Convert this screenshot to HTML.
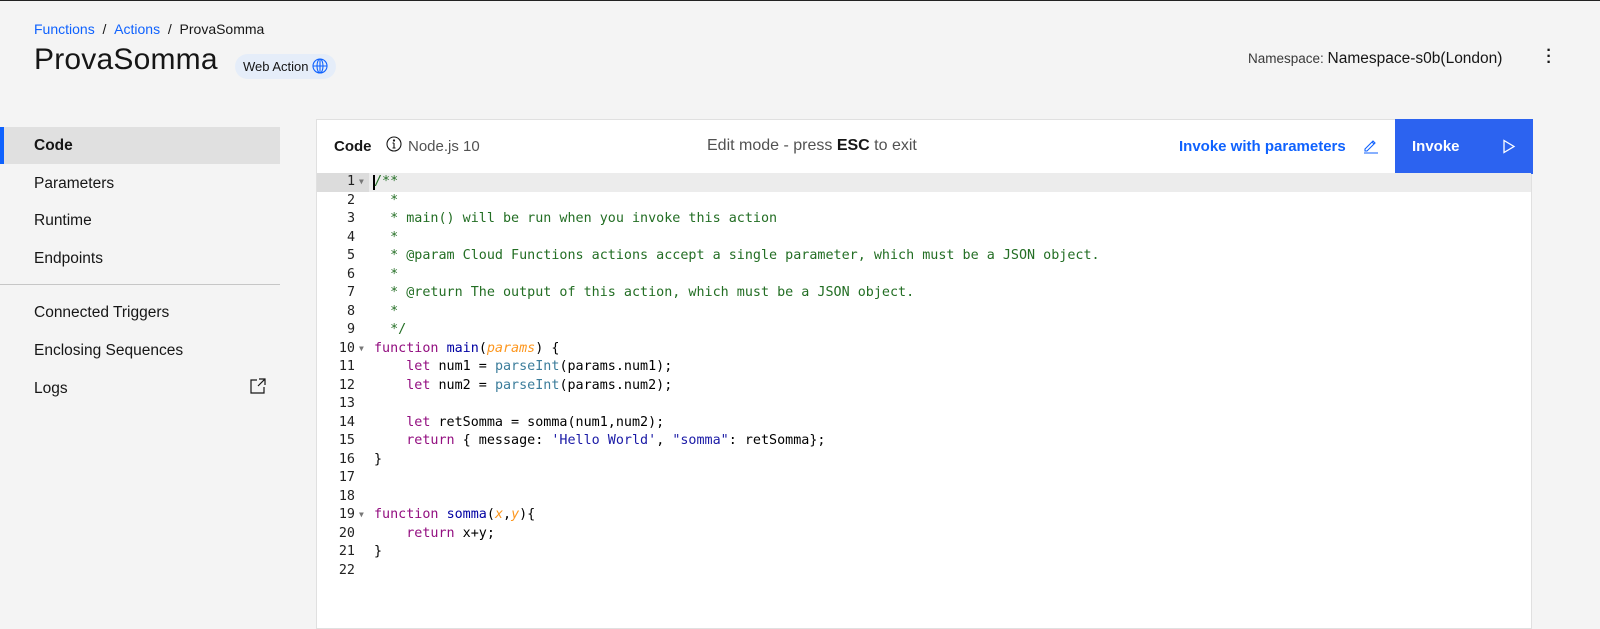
<!DOCTYPE html>
<html><head><meta charset="utf-8"><style>
*{box-sizing:border-box;margin:0;padding:0}
body{width:1600px;height:621px;background:#f4f4f4;font-family:"Liberation Sans",sans-serif;color:#161616;position:relative;overflow:hidden;border-top:1px solid #222}
.a{position:absolute;white-space:nowrap}
.bc{top:20px;left:34px;font-size:14px}
.bc .l{color:#0f62fe}
h1{position:absolute;left:34px;top:42px;font-size:30px;font-weight:400;letter-spacing:.2px}
.tag{left:235px;top:53px;height:25px;padding:0 8px;background:#e5edf9;border-radius:13px;font-size:13px;line-height:25px;color:#161616}
.nav{left:0;width:280px;font-size:15.5px;height:37px;line-height:37px;padding-left:34px}
.sel{background:#e0e0e0;border-left:4px solid #0f62fe;padding-left:30px;font-weight:bold}
.panel{left:316px;top:118px;width:1216px;height:510px;background:#fff;border:1px solid #e0e0e0}
.hdr{height:54px;border-bottom:1px solid #e0e0e0;position:relative}
.ln{position:absolute;left:0;width:38px;text-align:right;color:#222}
.tx{position:absolute;left:57px;white-space:pre;color:#000}
.c{color:#236e24}.k{color:#930f80}.f{color:#0000a2}.p{color:#fd971f;font-style:italic}.s{color:#1a1aa6}.b{color:#3c7d9b}
</style></head><body>
<div class="a bc"><span class="l">Functions</span>&nbsp;&nbsp;/&nbsp;&nbsp;<span class="l">Actions</span>&nbsp;&nbsp;/&nbsp;&nbsp;ProvaSomma</div>
<h1>ProvaSomma</h1>
<div class="a tag">Web Action <svg width="16" height="16" viewBox="0 0 16 16" style="vertical-align:-3px" fill="none" stroke="#0f62fe" stroke-width="1.1"><circle cx="8" cy="8" r="7"/><ellipse cx="8" cy="8" rx="3" ry="7"/><path d="M1 8h14M8 1v14"/></svg></div>
<div class="a" style="left:1248px;top:49px;font-size:13.5px;color:#393939">Namespace: <span style="font-size:15.5px;color:#161616">Namespace-s0b(London)</span></div>
<div class="a" style="left:1546px;top:47px;font-size:16px;font-weight:bold;line-height:6px;width:6px;text-align:center">·<br>·<br>·</div>

<div class="a nav sel" style="top:126px">Code</div>
<div class="a nav" style="top:164px">Parameters</div>
<div class="a nav" style="top:201px">Runtime</div>
<div class="a nav" style="top:239px">Endpoints</div>
<div class="a" style="left:0;top:283px;width:280px;height:1px;background:#c6c6c6"></div>
<div class="a nav" style="top:293px">Connected Triggers</div>
<div class="a nav" style="top:331px">Enclosing Sequences</div>
<div class="a nav" style="top:369px">Logs</div>
<svg class="a" style="left:249px;top:376px" width="18" height="18" viewBox="0 0 18 18" fill="none" stroke="#161616" stroke-width="1.2"><path d="M8 3H2v13h13v-6M10 2h6v6M16 2l-7 7"/></svg>

<div class="a panel">
 <div class="hdr">
  <div class="a" style="left:17px;top:18px;font-size:15px;font-weight:bold">Code</div>
  <svg class="a" style="left:69px;top:16px" width="16" height="16" viewBox="0 0 16 16" fill="none" stroke="#161616" stroke-width="1.1"><circle cx="8" cy="8" r="7"/><path d="M8 7v5M6.5 12h3M6.5 7H8"/><circle cx="8" cy="4.5" r=".6" fill="#161616"/></svg>
  <div class="a" style="left:91px;top:18px;font-size:15px;color:#525252">Node.js 10</div>
  <div class="a" style="left:390px;top:17px;font-size:16px;color:#525252">Edit mode - press <b style="color:#161616">ESC</b> to exit</div>
  <div class="a" style="left:862px;top:18px;font-size:15px;font-weight:bold;color:#0f62fe">Invoke with parameters</div>
  <svg class="a" style="left:1045px;top:17px" width="17" height="17" viewBox="0 0 17 17" fill="none" stroke="#0f62fe" stroke-width="1.1"><path d="M3 12l8-8 2 2-8 8H3zM10 5l2 2M2 16h14"/></svg>
  <div class="a" style="left:1078px;top:-1px;width:138px;height:55px;background:#2c63f0;color:#fff;font-size:15px;font-weight:bold;padding:19px 0 0 17px">Invoke
   <svg style="position:absolute;left:107px;top:20px" width="14" height="15" viewBox="0 0 14 15" fill="none" stroke="#fff" stroke-width="1.3"><path d="M2 1.5v12l10-6z"/></svg></div>
 </div>
</div>
<div class="a" style="left:317px;top:172px;width:1214px;height:450px;font-family:'DejaVu Sans Mono',monospace;font-size:13.4px;line-height:18.5px">
<div class="a" style="left:0;top:0;width:52px;height:18.5px;background:#dcdcdc"></div>
<div class="a" style="left:52px;top:0;width:1162px;height:18.5px;background:#ececec"></div>
<div class="ln" style="top:0">1</div><div class="ln" style="top:18.5px">2</div><div class="ln" style="top:37px">3</div><div class="ln" style="top:55.5px">4</div><div class="ln" style="top:74px">5</div><div class="ln" style="top:92.5px">6</div><div class="ln" style="top:111px">7</div><div class="ln" style="top:129.5px">8</div><div class="ln" style="top:148px">9</div><div class="ln" style="top:166.5px">10</div><div class="ln" style="top:185px">11</div><div class="ln" style="top:203.5px">12</div><div class="ln" style="top:222px">13</div><div class="ln" style="top:240.5px">14</div><div class="ln" style="top:259px">15</div><div class="ln" style="top:277.5px">16</div><div class="ln" style="top:296px">17</div><div class="ln" style="top:314.5px">18</div><div class="ln" style="top:333px">19</div><div class="ln" style="top:351.5px">20</div><div class="ln" style="top:370px">21</div><div class="ln" style="top:388.5px">22</div>
<div class="a" style="left:42px;top:0;font-size:8px;color:#777">▼</div><div class="a" style="left:42px;top:166.5px;font-size:8px;color:#777">▼</div><div class="a" style="left:42px;top:333px;font-size:8px;color:#777">▼</div>
<div class="a" style="left:56px;top:2px;width:2px;height:15px;background:#000"></div>
<div class="tx" style="top:0"><span class="c">/**
  *
  * main() will be run when you invoke this action
  *
  * @param Cloud Functions actions accept a single parameter, which must be a JSON object.
  *
  * @return The output of this action, which must be a JSON object.
  *
  */</span>
<span class="k">function</span> <span class="f">main</span>(<span class="p">params</span>) {
    <span class="k">let</span> num1 = <span class="b">parseInt</span>(params.num1);
    <span class="k">let</span> num2 = <span class="b">parseInt</span>(params.num2);

    <span class="k">let</span> retSomma = somma(num1,num2);
    <span class="k">return</span> { message: <span class="s">'Hello World'</span>, <span class="s">"somma"</span>: retSomma};
}


<span class="k">function</span> <span class="f">somma</span>(<span class="p">x</span>,<span class="p">y</span>){
    <span class="k">return</span> x+y;
}
</div>
</div>
</body></html>
